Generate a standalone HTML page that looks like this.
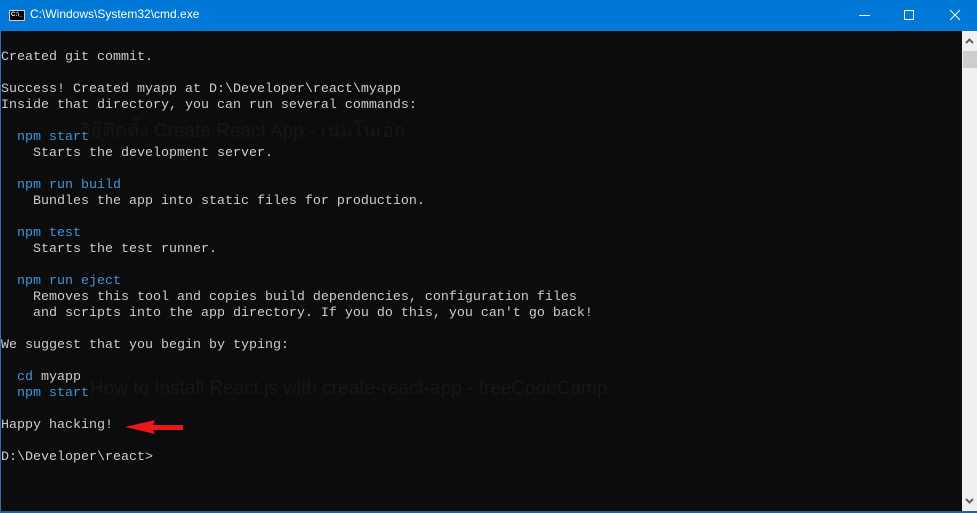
<!DOCTYPE html>
<html><head><meta charset="utf-8"><style>
html,body{margin:0;padding:0;width:977px;height:513px;overflow:hidden;background:#0c0c0c;}
#title{position:absolute;left:0;top:0;width:977px;height:31px;background:#0078d7;}
#title .t{position:absolute;left:30px;top:7px;color:#fff;font:12px "Liberation Sans",sans-serif;}
#icon{position:absolute;left:9px;top:10px;width:16px;height:11px;background:#000;border:1px solid #ccc;box-sizing:border-box;color:#fff;font:bold 6px "Liberation Sans",sans-serif;line-height:9px;padding-left:1px}
#con{position:absolute;left:1px;top:50px;font-family:"Liberation Mono",monospace;font-size:13.33px;line-height:16px;color:#cccccc;white-space:pre;}
.b{color:#3a96dd}
#sb{position:absolute;left:962px;top:31px;width:15px;height:480px;background:#f0f0f0;}
#thumb{position:absolute;left:1px;top:20px;width:14px;height:17px;background:#cdcdcd;}
#lb{position:absolute;left:0;top:31px;width:1px;height:482px;background:#2a6fb0}
#bb{position:absolute;left:0;top:511px;width:977px;height:2px;background:#2a5f90}
.faint{position:absolute;color:#171717;font:16px "Liberation Sans",sans-serif;}
</style></head><body>
<div id="title"><div id="icon">C:\_</div><div class="t">C:\Windows\System32\cmd.exe</div>
<svg style="position:absolute;left:820px;top:0" width="157" height="31">
<line x1="39" y1="15.5" x2="50" y2="15.5" stroke="#fff" stroke-width="1"/>
<rect x="84.5" y="10.5" width="9" height="9" fill="none" stroke="#fff" stroke-width="1"/>
<line x1="130" y1="10" x2="140" y2="20" stroke="#fff" stroke-width="1"/>
<line x1="140" y1="10" x2="130" y2="20" stroke="#fff" stroke-width="1"/>
</svg></div>
<div class="faint" style="left:80px;top:116px;font-size:19px">วิธีติดตั้ง Create React App - เนมโนเอก</div>
<div class="faint" style="left:90px;top:378px;font-size:19px">How to Install React.js with create-react-app - freeCodeCamp</div>
<div id="con">Created git commit.

Success! Created myapp at D:\Developer\react\myapp
Inside that directory, you can run several commands:

<span class="b">  npm start</span>
    Starts the development server.

<span class="b">  npm run build</span>
    Bundles the app into static files for production.

<span class="b">  npm test</span>
    Starts the test runner.

<span class="b">  npm run eject</span>
    Removes this tool and copies build dependencies, configuration files
    and scripts into the app directory. If you do this, you can't go back!

We suggest that you begin by typing:

<span class="b">  cd</span> myapp
<span class="b">  npm start</span>

Happy hacking!

D:\Developer\react&gt;</div>
<svg style="position:absolute;left:120px;top:418px" width="70" height="20">
<polygon points="5,9 35,2 33,7 63,7 63,12 33,12 35,16" fill="#e81818"/>
</svg>
<div id="sb"><div id="thumb"></div>
<svg style="position:absolute;left:0;top:0" width="15" height="480">
<polyline points="4,12 7.5,8.5 11,12" fill="none" stroke="#606060" stroke-width="2"/>
<polyline points="4,468 7.5,471.5 11,468" fill="none" stroke="#606060" stroke-width="2"/>
</svg></div>
<div id="lb"></div><div id="bb"></div>
</body></html>
